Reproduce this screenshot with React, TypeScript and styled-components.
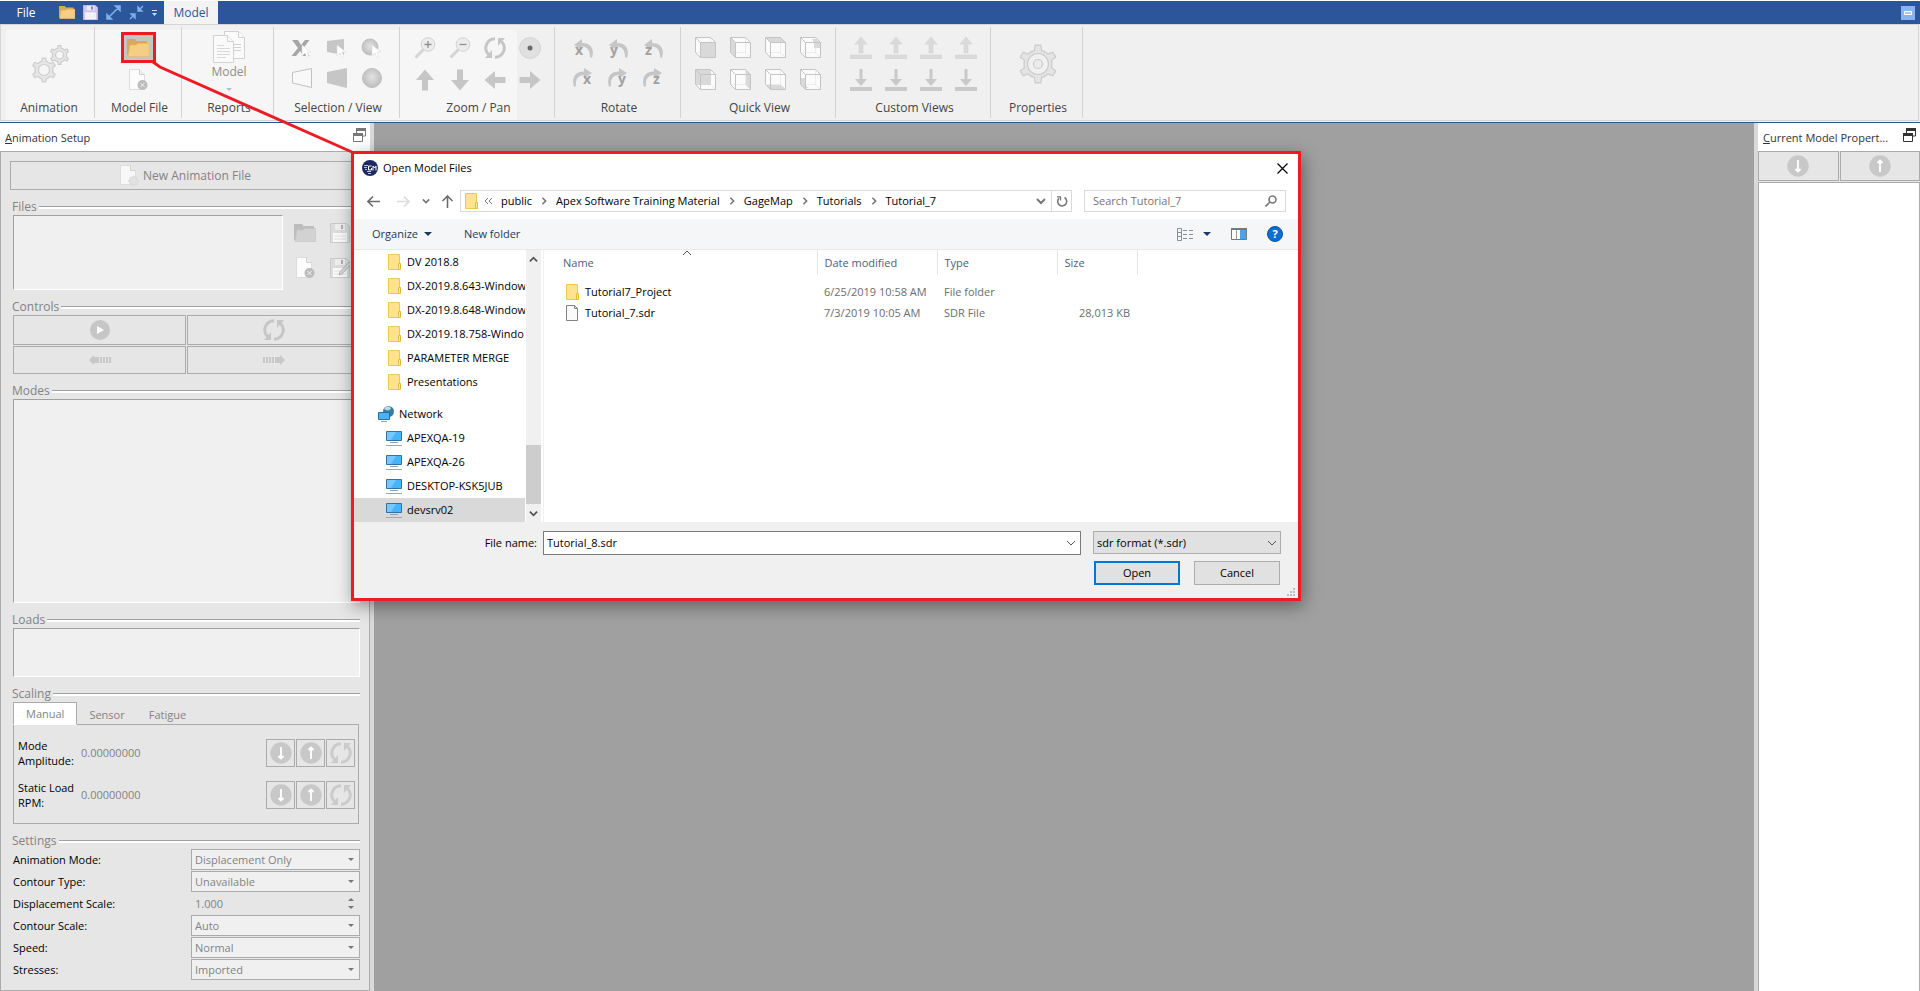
import React from "react";
import styled, { createGlobalStyle } from "styled-components";

const GlobalStyle = createGlobalStyle`
  * { box-sizing: border-box; }
  html, body, #root { height: 100%; }
  body {
    margin: 0;
    background: #a0a0a0;
    color: #000;
    font-family: "Open Sans", "Noto Sans", sans-serif;
    font-size: 11px;
    line-height: 16px;
  }
  button, input, select { font: inherit; margin: 0; border-radius: 0; }
  button { padding: 0; border: 0; background: none; color: inherit; }
  svg { display: block; flex: none; }
`;

/* ---------- icons ---------- */

const GREY = "#c6c6c6";

const gearPath = (cx: number, cy: number, outer: number, inner: number, teeth = 6) => {
  const step = (Math.PI * 2) / teeth;
  const pts: string[] = [];
  const at = (r: number, a: number) => `${(cx + r * Math.sin(a)).toFixed(2)} ${(cy - r * Math.cos(a)).toFixed(2)}`;
  for (let i = 0; i < teeth; i++) {
    const a = i * step;
    pts.push(at(inner, a - step * 0.25), at(outer, a - step * 0.14), at(outer, a + step * 0.14), at(inner, a + step * 0.25), at(inner, a + step * 0.5));
  }
  return `M${pts.join("L")}Z`;
};

const Gears = () => (
  <svg width="38" height="40" viewBox="0 0 38 40" fill="#e6e6e6" stroke="#cdcdcd" strokeWidth="1.2">
    <path d={gearPath(12, 26, 12, 9)} />
    <circle cx="12" cy="26" r="5.5" fill="#f6f6f6" />
    <path d={gearPath(27.5, 11, 9.5, 7)} />
    <circle cx="27.5" cy="11" r="4" fill="#f6f6f6" />
  </svg>
);

const BigGear = () => (
  <svg width="40" height="40" viewBox="0 0 40 40" fill="#e4e4e4" stroke="#cbcbcb" strokeWidth="1.2">
    <path d={gearPath(20, 20, 19, 14)} />
    <circle cx="20" cy="20" r="10.5" fill="#f0f0f0" />
    <circle cx="20" cy="20" r="4.5" fill="#ebebeb" />
  </svg>
);

const FolderIcon = ({ width = 22, grey = false }: { width?: number; grey?: boolean }) => (
  <svg width={width} height={(width * 18) / 22} viewBox="0 0 22 18">
    <path d="M0 0h8l1.500 2H20v14H0z" fill={grey ? "#bdbdbd" : "#d9a958"} />
    <path d="M1 17.500 3 6h6l2-1.500h11v13z" fill={grey ? "#d2d2d2" : "#f5cd83"} stroke={grey ? "#c4c4c4" : "#e6b96a"} strokeWidth=".6" />
  </svg>
);

const SaveIcon = ({ tone = "grey", pencil = false, size = 20 }: { tone?: "grey" | "violet"; pencil?: boolean; size?: number }) => {
  const v = tone === "violet";
  return (
    <svg width={size} height={size} viewBox="0 0 20 20">
      <path d="M.5.5h16l3 3v16H.5z" fill={v ? "#cfc6ea" : "#dcdcdc"} stroke={v ? "#cfc6ea" : "#cacaca"} />
      <path d="M5 1h10v6H5z" fill={v ? "#ece8f8" : "#efefef"} />
      <path d="M11 2h2v4h-2z" fill={v ? "#6d6a86" : "#b0b0b0"} />
      <path d="M3 10h14v9H3z" fill="#fafafa" />
      <path d="M4 13h12M4 16h12" stroke="#e0e0e0" />
      {pencil && <path d="m9 17 1-3 9-10 2 2-9 10z" fill="#d9d9d9" stroke="#ababab" strokeWidth=".8" />}
    </svg>
  );
};

const Expand = ({ inward = false }: { inward?: boolean }) => (
  <svg width="15" height="15" viewBox="0 0 15 15" fill="#7fb0ee" stroke="#7fb0ee" strokeWidth="1.400">
    {inward ? (
      <path d="M1 14l4-4M14 1l-4 4M2 9h4v4zM9 2v4h4z" />
    ) : (
      <path d="M2 13 13 2M9.500 1H14v4.500zM1 9.500V14h4.500z" strokeWidth="1.500" />
    )}
  </svg>
);

const DocDelete = () => (
  <svg width="20" height="22" viewBox="0 0 20 22">
    <path d="M1.500.5h10l5 5v15h-15z" fill="#fcfcfc" stroke="#dcdcdc" />
    <path d="M11.500.5v5h5" fill="#efefef" stroke="#d0d0d0" />
    <circle cx="14.500" cy="16" r="5" fill="#bcbcbc" />
    <path d="m12.500 14 4 4m0-4-4 4" stroke="#f2f2f2" />
  </svg>
);

const DocNew = () => (
  <svg width="20" height="22" viewBox="0 0 20 22">
    <path d="M1.500.5h10l5 5v14h-15z" fill="#f7f7f7" stroke="#dedede" />
    <path d="M11.500.5v5h5" fill="#e9e9e9" stroke="#d2d2d2" />
    <path d={gearPath(14.5, 16, 5, 4, 8)} fill="#e2e2e2" stroke="#d2d2d2" strokeWidth=".7" />
  </svg>
);

const ReportDocs = () => (
  <svg width="32" height="33" viewBox="0 0 32 33" fill="#fafafa" stroke="#d2d2d2">
    <path d="M11.500.5h14l6 6v21h-20z" />
    <path d="M25.500.5v6h6" />
    <path d="M21 13.500h7M21 16.500h7M21 19.500h7" />
    <path d="M.5 4.500h14l6 6v21H.5z" />
    <path d="M14.500 4.500v6h6" />
    <path d="M4 14.500h7M4 17.500h13M4 20.500h13M4 23.500h13M4 26.500h9" stroke="#d9d9d9" />
  </svg>
);

const Cursor = () => <path d="M11 7v11l3-3 2 5 2-1-2-5h4z" fill="#fff" stroke="#dedede" strokeWidth=".6" />;

const SelIcon = ({ kind, cursor = false }: { kind: "x" | "trap" | "trapLine" | "ball"; cursor?: boolean }) => (
  <svg width="22" height="22" viewBox="0 0 22 22">
    <defs>
      <radialGradient id="ball" cx=".5" cy=".45" r=".55">
        <stop offset="0" stopColor="#e2e2e2" />
        <stop offset="1" stopColor="#bdbdbd" />
      </radialGradient>
    </defs>
    {kind === "x" && <path d="M1 2h6l3 5 4-5h4.500l-6 8 6 8h-6l-3.500-5-4 5H.5l6.500-8z" fill="#a6a6a6" />}
    {kind === "trap" && <path d={cursor ? "M1 3 18 1v16L1 14z" : "M1 5 21 1v20L1 16z"} fill="#c6c6c6" />}
    {kind === "trapLine" && <path d="M1.500 5.500 20.500 1.500v19L1.500 16z" fill="#f8f8f8" stroke="#c2c2c2" />}
    {kind === "ball" && <circle cx={cursor ? 9 : 11} cy={cursor ? 9 : 11} r={cursor ? 8 : 9.5} fill="url(#ball)" stroke="#c0c0c0" />}
    {cursor && <Cursor />}
  </svg>
);

const Magnifier = ({ minus = false }: { minus?: boolean }) => (
  <svg width="22" height="22" viewBox="0 0 22 22">
    <path d="m1.500 20.500 8-8" stroke="#d4d4d4" strokeWidth="3" />
    <circle cx="14" cy="7.500" r="6.800" fill="#ececec" stroke="#d2d2d2" />
    <path d={minus ? "M10.500 7.500h7" : "M10.500 7.500h7M14 4v7"} stroke="#909090" strokeWidth="1.300" />
  </svg>
);

const Cycle = ({ color = GREY }: { color?: string }) => (
  <svg width="22" height="22" viewBox="0 0 22 22" fill="none" stroke={color} strokeWidth="3">
    <path d="M11 1.800A9.200 9.200 0 0 0 4.500 17.500" />
    <path d="M11 20.200A9.200 9.200 0 0 0 17.500 4.500" />
    <path d="M8 13v8H1z" fill={color} stroke="none" />
    <path d="M14 9V1h7z" fill={color} stroke="none" />
  </svg>
);

const Target = () => (
  <svg width="22" height="22" viewBox="0 0 22 22">
    <circle cx="11" cy="11" r="10.500" fill="#e0e0e0" stroke="#d4d4d4" />
    <circle cx="11" cy="11" r="2.500" fill="#6b6b6b" />
  </svg>
);

const Arrow = ({ turn }: { turn: number }) => (
  <svg width="22" height="22" viewBox="0 0 22 22">
    <path d="M11 0.500 20 11h-6v10.500H8V11H2z" fill={GREY} transform={`rotate(${turn} 11 11)`} />
  </svg>
);

const RotateIcon = ({ axis, back = false }: { axis: string; back?: boolean }) => (
  <svg width="22" height="22" viewBox="0 0 22 22">
    {back ? (
      <path d="M2 20C-1 10 4 4 12 4.500V1l8 5-8 5.500V8C7 8 3 12 4 19z" fill={GREY} />
    ) : (
      <path d="M20 20C23 10 18 5 10 5V1L2 7l8 5V8.500C15 8.500 18 12 18 19z" fill={GREY} />
    )}
    <text x={back ? 11 : 3} y="17" fontSize="14" fontWeight="700" fill="#a2a2a2">{axis}</text>
  </svg>
);

const cubeFaces: Record<string, string> = {
  front: "M5 5h15v15H5z",
  left: "M1 1 5 5v15l-4-4z",
  top: "M1 1h15l4 4H5z",
  cornerTop: "M12 2h4l4 4v5h-6V6z",
  back: "M1 1h15v15H1z",
  right: "M16 1l4 4v15l-4-4z",
  bottom: "M1 16h15l4 4H5z",
  cornerBottom: "M1 9h5v8l3 2H4l-3-3z",
};

const Cube = ({ face }: { face: string }) => (
  <svg width="21" height="21" viewBox="0 0 21 21" fill="none" stroke="#c4c4c4">
    <path d="M.5.5h15l5 5v15h-15l-5-5z" fill="#fbfbfb" stroke="none" />
    <path d="M15.500.5v15H.5M15.500 15.500l5 5" strokeDasharray="1 1" stroke="#dcdcdc" />
    <path d={cubeFaces[face]} fill="#d9d9d9" stroke="none" />
    <path d="M.5.5h15l5 5v15h-15l-5-5zM.5.5l5 5M5.500 20.500v-15h15" />
  </svg>
);

const ViewArrow = ({ down = false }: { down?: boolean }) => (
  <svg width="22" height="22" viewBox="0 0 22 22">
    {down ? (
      <path d="M9.500 0h3v10H17l-6 7-6-7h4.500zM0 18h22v4H0z" fill="#c9c9c9" />
    ) : (
      <path d="M11 0l6 7h-4v9H9V7H5zM0 18h22v4H0z" fill="#dadada" stroke="#d0d0d0" strokeWidth=".5" />
    )}
  </svg>
);

const RoundArrow = ({ up = false }: { up?: boolean }) => (
  <svg width="22" height="22" viewBox="0 0 22 22">
    <circle cx="11" cy="11" r="10.700" fill="#c8c8c8" />
    <path d={up ? "M11 17V6M8.500 8 11 5.500 13.500 8" : "M11 5v11M8.500 14l2.500 2.500 2.500-2.500"} fill="none" stroke="#fff" strokeWidth="1.800" />
  </svg>
);

const PlayIcon = () => (
  <svg width="20" height="20" viewBox="0 0 20 20">
    <circle cx="10" cy="10" r="10" fill="#c6c6c6" />
    <path d="m7 6 7 4-7 4z" fill="#fff" />
  </svg>
);

const StepArrow = ({ right = false }: { right?: boolean }) => (
  <svg width="22" height="10" viewBox="0 0 22 10">
    <path d="M5 0v2h5v6H5v2L0 5zM11 2h2v6h-2zM14 2h2v6h-2zM17 2h2v6h-2zM20 2h2v6h-2z" fill="#c8c8c8" transform={right ? "rotate(180 11 5)" : undefined} />
  </svg>
);

const FloatIcon = ({ color }: { color: string }) => (
  <svg width="13" height="14" viewBox="0 0 13 14" fill="none" stroke={color}>
    <path d="M3.500 5V1h9v7H9" />
    <path d="M3 1.500h10" strokeWidth="3" />
    <path d="M.5 6h9v7.500h-9z" fill="#fff" />
    <path d="M0 6.500h10" strokeWidth="3" />
  </svg>
);

const YellowFolder = () => (
  <svg width="13" height="16" viewBox="0 0 13 16">
    <path d="M.5.5h11v15H.5z" fill="#ffe38f" stroke="#ecc94f" />
    <path d="M10.500 9.500h2v6h-2z" fill="#ffe9a6" stroke="#e3bb3c" />
  </svg>
);

const PlainDoc = () => (
  <svg width="13" height="16" viewBox="0 0 13 16">
    <path d="M.5.5h8l3 3v12H.5z" fill="#fafafa" stroke="#848484" />
    <path d="M8.500.5v3h3" fill="none" stroke="#848484" />
  </svg>
);

const Monitor = () => (
  <svg width="16" height="16" viewBox="0 0 16 16">
    <path d="M.5 1.500h15v9H.5z" fill="#46b4fb" stroke="#34719e" />
    <path d="M1 2h9l-5 8H1z" fill="#74c8ff" />
    <path d="M4 12.500h8" stroke="#8ba3b5" />
    <path d="M0 15.500h16" stroke="#9aabb8" />
  </svg>
);

const NetworkIcon = () => (
  <svg width="16" height="16" viewBox="0 0 16 16">
    <circle cx="10.500" cy="5.500" r="5.500" fill="#3b7d9e" />
    <path d="M6 3c2-3 5-3 7-1-1 3-4 3-7 1z" fill="#b9dbe6" />
    <path d="M.5 6.500h11v7H.5z" fill="#46b4fb" stroke="#2d6c99" />
    <path d="M3 15.500h6" stroke="#8ba3b5" />
  </svg>
);

const Chevron = ({ turn = 0, color = "#555", width = 2, size = 10 }: { turn?: number; color?: string; width?: number; size?: number }) => (
  <svg width={size} height={size} viewBox="0 0 10 10" fill="none" stroke={color} strokeWidth={width}>
    <path d="m1 3 4 4 4-4" transform={`rotate(${turn} 5 5)`} />
  </svg>
);

const NavArrow = ({ color, turn = 0 }: { color: string; turn?: number }) => (
  <svg width="13" height="13" viewBox="0 0 13 13" fill="none" stroke={color} strokeWidth="1.600">
    <path d="M1 6.500h12M6 1.500l-5 5 5 5" transform={`rotate(${turn} 6.500 6.500)`} />
  </svg>
);

const Caret = ({ color = "#1f3864", width = 8 }: { color?: string; width?: number }) => (
  <svg width={width} height={width / 2} viewBox="0 0 8 4"><path d="M0 0h8L4 4z" fill={color} /></svg>
);

const AppLogo = () => (
  <svg width="16" height="16" viewBox="0 0 16 16">
    <circle cx="8" cy="8" r="8" fill="#1c2963" />
    <path d="M2 5.500h4M2 7.500h3M3 9.500h2M5 11.500h4M6 13.500h3" stroke="#b9c0dc" />
    <path d="M9.500 6H6.500v4h3V8M11 10.500V6l1.500 2L14 6v4.500" fill="none" stroke="#fff" />
  </svg>
);

/* ---------- frame ---------- */

const Page = styled.div`
  position: relative;
  display: flex;
  flex-direction: column;
  height: 100vh;
  min-height: 900px;
  overflow: hidden;
`;

const TitleBar = styled.header`
  display: flex;
  align-items: center;
  height: 24px;
  border-top: 1px solid #fff;
  background: #2b579a;
  color: #fff;
  font-size: 12px;
`;

const FileMenu = styled.button`
  width: 52px;
  color: #fff;
`;

const QuickAccess = styled.div`
  display: flex;
  align-items: center;
  gap: 8px;
  width: 112px;
  padding-left: 7px;
`;

const ModelTab = styled.button`
  align-self: stretch;
  width: 54px;
  background: #f3f3f3;
  color: #2b579a;
`;

const MinimizeRibbon = styled.button`
  display: grid;
  place-items: center;
  width: 14px;
  height: 14px;
  margin: 0 5px 0 auto;
  background: #8ab4f0;
`;

const RibbonFrame = styled.div`
  padding: 0 1px 1px 0;
  border-bottom: 1px solid #2b579a;
  background: #f0f0f0;
`;

const Ribbon = styled.nav`
  display: flex;
  height: 97px;
  padding: 2px 0;
  border: 1px solid #d5d5d5;
  background: linear-gradient(#f6f6f6, #f6f6f6) 5px 5px / 511px 100% no-repeat #f0f0f0;
  font-size: 12px;
`;

const RibbonGroup = styled.section<{ $width: number }>`
  display: flex;
  flex-direction: column;
  align-items: center;
  flex: none;
  width: ${(p) => p.$width}px;
  padding-top: 4px;
  border-right: 1px solid #d2d2d2;
`;

const RibbonBody = styled.div<{ $indent?: number }>`
  display: flex;
  flex-direction: column;
  align-items: center;
  justify-content: center;
  height: 65px;
  padding-left: ${(p) => p.$indent ?? 0}px;
`;

const RibbonLabel = styled.h2`
  margin: 4px 0 0;
  padding-left: 3px;
  color: #444;
  font-size: 12px;
  font-weight: 400;
  line-height: 16px;
`;

const IconGrid = styled.div<{ $cols: number; $row: number }>`
  display: grid;
  grid-template-columns: repeat(${(p) => p.$cols}, 35px);
  grid-auto-rows: ${(p) => p.$row}px;
`;

const IconButton = styled.button`
  display: grid;
  place-items: center;
`;

const MarkedButton = styled.button`
  display: grid;
  place-items: center;
  width: 35px;
  height: 31px;
  border: 3px solid #ed1c24;
  background: #c5c5c5;
`;

const ModelFileBody = styled(RibbonBody)`
  gap: 6px;
  justify-content: flex-start;
  padding-top: 1px;
`;

const ReportBody = styled(RibbonBody)`
  justify-content: flex-start;
`;

const ReportButton = styled.button`
  display: flex;
  flex-direction: column;
  align-items: center;
  color: #8d8d8d;
  svg:last-child { margin-top: 8px; }
`;

/* ---------- workspace ---------- */

const Workspace = styled.div`
  display: flex;
  flex: 1;
  min-height: 0;
`;

const SidePanel = styled.aside<{ $side: "left" | "right" }>`
  display: flex;
  flex-direction: column;
  flex: none;
  width: ${(p) => (p.$side === "left" ? 374 : 166)}px;
  border: 0 solid #d9d9d9;
  border-width: ${(p) => (p.$side === "left" ? "0 4px 0 0" : "0 0 0 4px")};
  background: #fff;
`;

const Canvas = styled.main`
  flex: 1;
  background: #a0a0a0;
`;

const PanelTitle = styled.div`
  display: flex;
  align-items: flex-start;
  justify-content: space-between;
  height: 28px;
  padding: 5px 4px 0 5px;
  color: #333;
`;

const PanelHeading = styled.h2`
  margin: 2px 0 0;
  overflow: hidden;
  font-size: 11px;
  font-weight: 400;
  text-overflow: ellipsis;
  white-space: nowrap;
`;

const PanelBody = styled.div`
  display: flex;
  flex-direction: column;
  flex: 1;
  min-height: 0;
  padding: 9px 9px 10px;
  border: 1px solid #ababab;
  background: #e6e6e6;
`;

const FlatButton = styled.button<{ $height?: number }>`
  display: flex;
  align-items: center;
  justify-content: center;
  gap: 4px;
  width: 100%;
  height: ${(p) => p.$height ?? 28}px;
  border: 1px solid #ababab;
  background: #e6e6e6;
  color: #838383;
  font-size: 12px;
`;

const Group = styled.section<{ $grow?: boolean }>`
  display: flex;
  flex-direction: column;
  flex: ${(p) => (p.$grow ? "1" : "none")};
  min-height: 0;
  margin-top: 9px;
`;

const Legend = styled.h3`
  display: flex;
  align-items: center;
  gap: 2px;
  margin: 0 0 0 2px;
  color: #838383;
  font-size: 12px;
  font-weight: 400;
  line-height: 16px;
  &::after {
    content: "";
    flex: 1;
    height: 2px;
    border-top: 1px solid #a0a0a0;
    background: #fff;
  }
`;

const GroupBody = styled.div`
  display: flex;
  flex-direction: column;
  flex: 1;
  padding-left: 3px;
`;

const Well = styled.div<{ $height?: number; $width?: number }>`
  flex: ${(p) => (p.$height ? "none" : "1")};
  height: ${(p) => (p.$height ? `${p.$height}px` : "auto")};
  width: ${(p) => (p.$width ? `${p.$width}px` : "auto")};
  border: 1px solid;
  border-color: #a0a0a0 #fff #fff #a0a0a0;
  background: #f0f0f0;
`;

const FilesRow = styled.div`
  display: flex;
  gap: 4px;
`;

const ControlGrid = styled.div`
  display: grid;
  grid-template-columns: 1fr 1fr;
  grid-template-rows: 30px 28px;
  gap: 1px;
`;

const Tabs = styled.div`
  display: flex;
  height: 23px;
  margin-bottom: -1px;
`;

const TabButton = styled.button<{ $active?: boolean }>`
  z-index: 1;
  padding: ${(p) => (p.$active ? "0 12px" : "2px 11px 0")};
  border: 1px solid ${(p) => (p.$active ? "#ababab" : "transparent")};
  border-bottom-color: ${(p) => (p.$active ? "#fff" : "transparent")};
  background: ${(p) => (p.$active ? "#fff" : "none")};
  color: #838383;
`;

const TabPanel = styled.div`
  display: flex;
  flex-direction: column;
  gap: 14px;
  margin-right: 1px;
  padding: 14px 3px 14px 4px;
  border: 1px solid #ababab;
`;

const ScaleRow = styled.div`
  display: flex;
  align-items: center;
  gap: 1px;
  height: 28px;
`;

const ScaleLabel = styled.label`
  width: 62px;
  line-height: 15px;
`;

const ScaleInput = styled.input`
  flex: 1;
  min-width: 0;
  padding: 0;
  border: 0;
  background: none;
  color: #838383;
`;

const SquareButton = styled.button`
  display: grid;
  place-items: center;
  width: 29px;
  height: 28px;
  border: 1px solid #ababab;
`;

const SettingRow = styled.div`
  display: flex;
  align-items: center;
  height: 21px;
  margin-bottom: 1px;
  &:last-child { margin-bottom: 0; }
`;

const SettingLabel = styled.label`
  flex: 1;
`;

const FieldWrap = styled.div<{ $plain?: boolean }>`
  position: relative;
  width: 169px;
  height: 21px;
  border: 1px solid ${(p) => (p.$plain ? "transparent" : "#ababab")};
  background: ${(p) => (p.$plain ? "none" : "#f0f0f0")};
`;

const SettingSelect = styled.select`
  appearance: none;
  width: 100%;
  height: 100%;
  padding: 0 3px;
  border: 0;
  background: none;
  color: #838383;
  opacity: 1;
`;

const SettingInput = styled.input`
  width: 100%;
  height: 100%;
  padding: 0 3px;
  border: 0;
  background: none;
  color: #838383;
`;

const FieldMark = styled.span<{ $right: number }>`
  position: absolute;
  top: 0;
  right: ${(p) => p.$right}px;
  bottom: 0;
  display: flex;
  flex-direction: column;
  justify-content: center;
  gap: 5px;
  pointer-events: none;
`;

const ButtonPair = styled.div`
  display: grid;
  grid-template-columns: 1fr 1fr;
  gap: 1px;
  padding-bottom: 1px;
  background: #e6e6e6;
`;

const PropertyList = styled.div`
  flex: 1;
  border: 1px solid #ababab;
  border-bottom: 0;
  background: #fff;
`;

/* ---------- dialog ---------- */

const Dialog = styled.div`
  position: absolute;
  top: 151px;
  left: 351px;
  display: flex;
  flex-direction: column;
  width: 950px;
  border: 3px solid #ed1c24;
  background: #fff;
  box-shadow: 2px 5px 16px rgba(0, 0, 0, 0.4);
`;

const DialogTitle = styled.div`
  display: flex;
  align-items: center;
  gap: 5px;
  height: 36px;
  padding: 0 8px 8px;
`;

const DialogHeading = styled.h1`
  flex: 1;
  margin: 0;
  font-size: 11px;
  font-weight: 400;
  line-height: 16px;
`;

const NavRow = styled.div`
  display: flex;
  height: 22px;
  margin: 0 12px 7px 4px;
`;

const NavButton = styled.button<{ $width: number }>`
  display: grid;
  place-items: center;
  width: ${(p) => p.$width}px;
`;

const AddressBar = styled.div`
  display: flex;
  align-items: center;
  flex: 1;
  padding-left: 4px;
  border: 1px solid #d9d9d9;
`;

const Crumb = styled.button`
  padding: 0 8px;
`;

const Overflow = styled.span`
  display: flex;
  margin-left: 6px;
  width: 9px;
`;

const AddressTools = styled.div`
  display: flex;
  align-self: stretch;
  margin-left: auto;
`;

const RefreshButton = styled(NavButton)`
  border-left: 1px solid #d9d9d9;
`;

const SearchBox = styled.div`
  display: flex;
  align-items: center;
  width: 202px;
  margin-left: 12px;
  padding: 0 8px;
  border: 1px solid #d9d9d9;
`;

const SearchInput = styled.input`
  flex: 1;
  min-width: 0;
  padding: 0;
  border: 0;
  outline: 0;
  &::placeholder { color: #757575; opacity: 1; }
`;

const Toolbar = styled.div`
  display: flex;
  align-items: center;
  height: 31px;
  padding: 0 15px 0 18px;
  border-bottom: 1px solid #e8e8ea;
  background: #f5f6f7;
  color: #1e395b;
`;

const ToolButton = styled.button`
  display: flex;
  align-items: center;
  gap: 6px;
  margin-right: 32px;
`;

const ToolIcons = styled.div`
  display: flex;
  align-items: center;
  gap: 20px;
  margin-left: auto;
`;

const ViewPicker = styled.button`
  display: flex;
  align-items: center;
  gap: 9px;
`;

const Browser = styled.div`
  display: flex;
  height: 272px;
`;

const Tree = styled.ul`
  width: 171px;
  margin: 0;
  padding: 0;
  overflow: hidden;
  list-style: none;
`;

const TreeItem = styled.li<{ $root?: boolean }>`
  margin-top: ${(p) => (p.$root ? 8 : 0)}px;
`;

const TreeButton = styled.button<{ $indent: number; $selected?: boolean }>`
  display: flex;
  align-items: center;
  gap: 5px;
  width: 100%;
  height: 24px;
  padding-left: ${(p) => p.$indent}px;
  background: ${(p) => (p.$selected ? "#d9d9d9" : "none")};
  white-space: nowrap;
`;

const TreeIcon = styled.span`
  display: flex;
  justify-content: center;
  flex: none;
  width: 16px;
`;

const ScrollTrack = styled.div`
  display: flex;
  flex-direction: column;
  width: 15px;
  margin: 0 2px 0 1px;
  background: #f0f0f0;
`;

const ScrollEnd = styled.button`
  display: grid;
  place-items: center;
  height: 18px;
`;

const ScrollThumb = styled.div`
  height: 59px;
  margin-top: auto;
  background: #cdcdcd;
`;

const FilePane = styled.div`
  flex: 1;
  border-left: 1px solid #f0f0f0;
`;

const FileTable = styled.table`
  border-collapse: collapse;
  table-layout: fixed;
  width: 593px;
`;

const HeadCell = styled.th<{ $width: number; $first?: boolean }>`
  position: relative;
  width: ${(p) => p.$width}px;
  height: 25px;
  padding: 0 0 0 ${(p) => (p.$first ? 19 : 7)}px;
  border-right: 1px solid #e5e5e5;
  color: #4c607a;
  font-weight: 400;
  text-align: left;
`;

const SortMark = styled.span`
  position: absolute;
  top: -2px;
  left: 138px;
`;

const FileRow = styled.tr<{ $first?: boolean }>`
  height: ${(p) => (p.$first ? 28 : 21)}px;
  vertical-align: bottom;
`;

const Cell = styled.td<{ $right?: boolean }>`
  padding: 0 7px 3px;
  color: #6d6d6d;
  text-align: ${(p) => (p.$right ? "right" : "left")};
  white-space: nowrap;
`;

const NameCell = styled.td`
  padding: 0 0 3px 22px;
`;

const FileName = styled.div`
  display: flex;
  align-items: center;
  gap: 6px;
`;

const Footer = styled.div`
  position: relative;
  display: flex;
  flex-direction: column;
  gap: 6px;
  height: 76px;
  padding: 9px 17px 0 0;
  background: #f0f0f0;
`;

const FooterRow = styled.div`
  display: flex;
  justify-content: flex-end;
  height: 24px;
`;

const FileLabel = styled.label`
  width: 189px;
  padding: 4px 6px 0 0;
  text-align: right;
`;

const NameBox = styled.div`
  display: flex;
  flex: 1;
  margin-right: 12px;
  border: 1px solid #7a7a7a;
  background: #fff;
`;

const NameInput = styled.input`
  flex: 1;
  padding: 0 3px;
  border: 0;
  outline: 0;
`;

const FormatWrap = styled.div`
  position: relative;
  width: 188px;
  height: 23px;
`;

const FormatSelect = styled.select`
  appearance: none;
  width: 100%;
  height: 100%;
  padding: 0 3px;
  border: 1px solid #adadad;
  background: #e1e1e1;
  color: #000;
`;

const ActionRow = styled(FooterRow)`
  gap: 14px;
  padding-right: 1px;
`;

const ActionButton = styled.button<{ $primary?: boolean }>`
  width: 86px;
  height: 24px;
  border: ${(p) => (p.$primary ? "2px solid #0078d7" : "1px solid #adadad")};
  background: #e1e1e1;
`;

const Grip = styled.span`
  position: absolute;
  right: 3px;
  bottom: 2px;
`;

const Callout = styled.svg`
  position: absolute;
  top: 60px;
  left: 150px;
  pointer-events: none;
`;

/* ---------- data ---------- */

const ribbonGrids = [
  {
    label: "Selection / View", width: 126, cols: 3, row: 29,
    icons: [
      <SelIcon kind="x" cursor />, <SelIcon kind="trap" cursor />, <SelIcon kind="ball" cursor />,
      <SelIcon kind="trapLine" />, <SelIcon kind="trap" />, <SelIcon kind="ball" />,
    ],
  },
  {
    label: "Zoom / Pan", width: 155, cols: 4, row: 32,
    icons: [
      <Magnifier />, <Magnifier minus />, <Cycle />, <Target />,
      <Arrow turn={0} />, <Arrow turn={180} />, <Arrow turn={270} />, <Arrow turn={90} />,
    ],
  },
  {
    label: "Rotate", width: 126, cols: 3, row: 29,
    icons: [
      <RotateIcon axis="x" />, <RotateIcon axis="y" />, <RotateIcon axis="z" />,
      <RotateIcon axis="x" back />, <RotateIcon axis="y" back />, <RotateIcon axis="z" back />,
    ],
  },
  {
    label: "Quick View", width: 155, cols: 4, row: 32,
    icons: ["front", "left", "top", "cornerTop", "back", "right", "bottom", "cornerBottom"].map((f) => <Cube face={f} />),
  },
  {
    label: "Custom Views", width: 155, cols: 4, row: 32,
    icons: [0, 1, 2, 3, 4, 5, 6, 7].map((n) => <ViewArrow down={n > 3} />),
  },
];

const treeFolders = ["DV 2018.8", "DX-2019.8.643-Window", "DX-2019.8.648-Window", "DX-2019.18.758-Windo", "PARAMETER MERGE", "Presentations"];
const treeComputers = ["APEXQA-19", "APEXQA-26", "DESKTOP-KSK5JUB", "devsrv02"];
const crumbs = ["public", "Apex Software Training Material", "GageMap", "Tutorials", "Tutorial_7"];

const settings = [
  { label: "Animation Mode:", value: "Displacement Only" },
  { label: "Contour Type:", value: "Unavailable" },
  { label: "Displacement Scale:", value: "1.000", spin: true },
  { label: "Contour Scale:", value: "Auto" },
  { label: "Speed:", value: "Normal" },
  { label: "Stresses:", value: "Imported" },
];

const scales = [
  { id: "amplitude", lines: ["Mode", "Amplitude:"] },
  { id: "rpm", lines: ["Static Load", "RPM:"] },
];

const AnimationPanel = () => (
  <SidePanel $side="left">
    <PanelTitle>
      <PanelHeading><u>A</u>nimation Setup</PanelHeading>
      <IconButton aria-label="Float panel"><FloatIcon color="#777" /></IconButton>
    </PanelTitle>
    <PanelBody>
      <FlatButton $height={29}><DocNew />New Animation File</FlatButton>
      <Group>
        <Legend>Files</Legend>
        <GroupBody>
          <FilesRow>
            <Well $height={75} $width={270} />
            <IconGrid $cols={2} $row={35}>
              <IconButton aria-label="Open file"><FolderIcon grey /></IconButton>
              <IconButton aria-label="Save file"><SaveIcon /></IconButton>
              <IconButton aria-label="Remove file"><DocDelete /></IconButton>
              <IconButton aria-label="Save file as"><SaveIcon pencil /></IconButton>
            </IconGrid>
          </FilesRow>
        </GroupBody>
      </Group>
      <Group>
        <Legend>Controls</Legend>
        <GroupBody>
          <ControlGrid>
            <FlatButton $height={30} aria-label="Play"><PlayIcon /></FlatButton>
            <FlatButton $height={30} aria-label="Loop"><Cycle /></FlatButton>
            <FlatButton aria-label="Step back"><StepArrow /></FlatButton>
            <FlatButton aria-label="Step forward"><StepArrow right /></FlatButton>
          </ControlGrid>
        </GroupBody>
      </Group>
      <Group $grow>
        <Legend>Modes</Legend>
        <GroupBody><Well /></GroupBody>
      </Group>
      <Group>
        <Legend>Loads</Legend>
        <GroupBody><Well $height={49} /></GroupBody>
      </Group>
      <Group>
        <Legend>Scaling</Legend>
        <GroupBody>
          <Tabs role="tablist">
            <TabButton role="tab" aria-selected $active>Manual</TabButton>
            <TabButton role="tab">Sensor</TabButton>
            <TabButton role="tab">Fatigue</TabButton>
          </Tabs>
          <TabPanel>
            {scales.map((s) => (
              <ScaleRow key={s.id}>
                <ScaleLabel htmlFor={s.id}>{s.lines[0]}<br />{s.lines[1]}</ScaleLabel>
                <ScaleInput id={s.id} defaultValue="0.00000000" />
                <SquareButton aria-label="Decrease"><RoundArrow /></SquareButton>
                <SquareButton aria-label="Increase"><RoundArrow up /></SquareButton>
                <SquareButton aria-label="Reset"><Cycle color="#cbcbcb" /></SquareButton>
              </ScaleRow>
            ))}
          </TabPanel>
        </GroupBody>
      </Group>
      <Group>
        <Legend>Settings</Legend>
        <GroupBody>
          {settings.map((s) => (
            <SettingRow key={s.label}>
              <SettingLabel htmlFor={s.label}>{s.label}</SettingLabel>
              <FieldWrap $plain={s.spin}>
                {s.spin ? (
                  <SettingInput id={s.label} defaultValue={s.value} />
                ) : (
                  <SettingSelect id={s.label}><option>{s.value}</option></SettingSelect>
                )}
                <FieldMark $right={5}>
                  {s.spin && <svg width="6" height="3" viewBox="0 0 6 3"><path d="M0 3h6L3 0z" fill="#777" /></svg>}
                  <Caret color="#777" width={6} />
                </FieldMark>
              </FieldWrap>
            </SettingRow>
          ))}
        </GroupBody>
      </Group>
    </PanelBody>
  </SidePanel>
);

const OpenDialog = () => (
  <Dialog role="dialog" aria-labelledby="dialog-title">
    <DialogTitle>
      <AppLogo />
      <DialogHeading id="dialog-title">Open Model Files</DialogHeading>
      <NavButton $width={15} aria-label="Close">
        <svg width="11" height="11" viewBox="0 0 11 11" stroke="#000" strokeWidth="1.200"><path d="m.5.5 10 10m0-10-10 10" /></svg>
      </NavButton>
    </DialogTitle>
    <NavRow>
      <NavButton $width={30} aria-label="Back"><NavArrow color="#6b6b6b" /></NavButton>
      <NavButton $width={30} aria-label="Forward"><NavArrow color="#dcdcdc" turn={180} /></NavButton>
      <NavButton $width={16} aria-label="Recent locations"><Chevron size={8} color="#777" /></NavButton>
      <NavButton $width={26} aria-label="Up"><NavArrow color="#6b6b6b" turn={90} /></NavButton>
      <AddressBar>
        <YellowFolder />
        <Overflow>
          <svg width="9" height="8" viewBox="0 0 9 8" fill="none" stroke="#777"><path d="M4 1 1 4l3 3M8 1 5 4l3 3" /></svg>
        </Overflow>
        {crumbs.map((c, i) => (
          <React.Fragment key={c}>
            {i > 0 && <Chevron turn={270} size={8} color="#777" />}
            <Crumb>{c}</Crumb>
          </React.Fragment>
        ))}
        <AddressTools>
          <NavButton $width={20} aria-label="Previous locations"><Chevron color="#777" /></NavButton>
          <RefreshButton $width={20} aria-label="Refresh">
            <svg width="12" height="12" viewBox="0 0 12 12" fill="none" stroke="#777" strokeWidth="1.600">
              <path d="M8.500 2.500A4.500 4.500 0 1 1 3 3.200" />
              <path d="M1 1.800h3.500v3.700" strokeWidth="1.300" />
            </svg>
          </RefreshButton>
        </AddressTools>
      </AddressBar>
      <SearchBox>
        <SearchInput aria-label="Search Tutorial_7" placeholder="Search Tutorial_7" />
        <svg width="12" height="12" viewBox="0 0 12 12" fill="none" stroke="#777" strokeWidth="1.600"><circle cx="7.500" cy="4.500" r="3.500" /><path d="M5 7 .5 11.500" /></svg>
      </SearchBox>
    </NavRow>
    <Toolbar>
      <ToolButton>Organize <Caret /></ToolButton>
      <ToolButton>New folder</ToolButton>
      <ToolIcons>
        <ViewPicker aria-label="Change view">
          <svg width="17" height="13" viewBox="0 0 17 13" fill="none" stroke="#8a8f96">
            <path d="M.5.5h4v12h-4zM.5 4.500h4M.5 8.500h4M6 2.500h4M12 2.500h4M6 6.500h4M12 6.500h4M6 10.500h4M12 10.500h4" />
          </svg>
          <Caret />
        </ViewPicker>
        <IconButton aria-label="Preview pane">
          <svg width="16" height="12" viewBox="0 0 16 12"><path d="M.5.5h15v11H.5z" fill="#fff" stroke="#777" /><path d="M0 1h16" stroke="#777" strokeWidth="2" /><path d="M5.500 2v9" stroke="#999" /><path d="M9 2h6v9H9z" fill="#4aa3ea" /></svg>
        </IconButton>
        <IconButton aria-label="Help">
          <svg width="16" height="16" viewBox="0 0 16 16"><circle cx="8" cy="8" r="7.500" fill="#0a6fd0" stroke="#0b4f9a" /><text x="8" y="12" fontSize="11" fontWeight="700" fill="#fff" textAnchor="middle">?</text></svg>
        </IconButton>
      </ToolIcons>
    </Toolbar>
    <Browser>
      <Tree>
        {treeFolders.map((name) => (
          <TreeItem key={name}><TreeButton $indent={32}><TreeIcon><YellowFolder /></TreeIcon>{name}</TreeButton></TreeItem>
        ))}
        <TreeItem $root><TreeButton $indent={24}><TreeIcon><NetworkIcon /></TreeIcon>Network</TreeButton></TreeItem>
        {treeComputers.map((name) => (
          <TreeItem key={name}><TreeButton $indent={32} $selected={name === "devsrv02"}><TreeIcon><Monitor /></TreeIcon>{name}</TreeButton></TreeItem>
        ))}
      </Tree>
      <ScrollTrack>
        <ScrollEnd aria-label="Scroll up"><Chevron turn={180} size={9} /></ScrollEnd>
        <ScrollThumb />
        <ScrollEnd aria-label="Scroll down"><Chevron size={9} /></ScrollEnd>
      </ScrollTrack>
      <FilePane>
        <FileTable>
          <thead>
            <tr>
              <HeadCell $width={273} $first>Name<SortMark><Chevron turn={180} width={1} /></SortMark></HeadCell>
              <HeadCell $width={120}>Date modified</HeadCell>
              <HeadCell $width={120}>Type</HeadCell>
              <HeadCell $width={80}>Size</HeadCell>
            </tr>
          </thead>
          <tbody>
            <FileRow $first>
              <NameCell><FileName><YellowFolder />Tutorial7_Project</FileName></NameCell>
              <Cell>6/25/2019 10:58 AM</Cell><Cell>File folder</Cell><Cell />
            </FileRow>
            <FileRow>
              <NameCell><FileName><PlainDoc />Tutorial_7.sdr</FileName></NameCell>
              <Cell>7/3/2019 10:05 AM</Cell><Cell>SDR File</Cell><Cell $right>28,013 KB</Cell>
            </FileRow>
          </tbody>
        </FileTable>
      </FilePane>
    </Browser>
    <Footer>
      <FooterRow>
        <FileLabel htmlFor="file-name">File name:</FileLabel>
        <NameBox>
          <NameInput id="file-name" defaultValue="Tutorial_8.sdr" />
          <NavButton $width={18} aria-label="Previous file names"><Chevron width={1} /></NavButton>
        </NameBox>
        <FormatWrap>
          <FormatSelect aria-label="File format"><option>sdr format (*.sdr)</option></FormatSelect>
          <FieldMark $right={4}><Chevron width={1} /></FieldMark>
        </FormatWrap>
      </FooterRow>
      <ActionRow>
        <ActionButton $primary>Open</ActionButton>
        <ActionButton>Cancel</ActionButton>
      </ActionRow>
      <Grip>
        <svg width="8" height="8" viewBox="0 0 8 8" fill="#bdbdbd"><path d="M6 0h2v2H6zM3 3h2v2H3zM6 3h2v2H6zM0 6h2v2H0zM3 6h2v2H3zM6 6h2v2H6z" /></svg>
      </Grip>
    </Footer>
  </Dialog>
);

export default function App() {
  return (
    <Page>
      <GlobalStyle />
      <TitleBar>
        <FileMenu>File</FileMenu>
        <QuickAccess>
          <IconButton aria-label="Open"><FolderIcon width={16} /></IconButton>
          <IconButton aria-label="Save"><SaveIcon tone="violet" size={15} /></IconButton>
          <IconButton aria-label="Expand"><Expand /></IconButton>
          <IconButton aria-label="Collapse"><Expand inward /></IconButton>
          <IconButton aria-label="Customize"><svg width="5" height="6" viewBox="0 0 5 6" fill="#c9d8ef"><path d="M0 0h5v1H0zM0 3h5L2.500 6z" /></svg></IconButton>
        </QuickAccess>
        <ModelTab>Model</ModelTab>
        <MinimizeRibbon aria-label="Minimize ribbon">
          <svg width="8" height="4" viewBox="0 0 8 4"><path d="M.5.5h7v3h-7z" fill="#a9c8f5" stroke="#fff" /></svg>
        </MinimizeRibbon>
      </TitleBar>
      <RibbonFrame>
        <Ribbon>
          <RibbonGroup $width={94}>
            <RibbonBody $indent={6}><IconButton aria-label="Animation"><Gears /></IconButton></RibbonBody>
            <RibbonLabel>Animation</RibbonLabel>
          </RibbonGroup>
          <RibbonGroup $width={87}>
            <ModelFileBody>
              <MarkedButton aria-label="Open model file"><FolderIcon /></MarkedButton>
              <IconButton aria-label="Close model file"><DocDelete /></IconButton>
            </ModelFileBody>
            <RibbonLabel>Model File</RibbonLabel>
          </RibbonGroup>
          <RibbonGroup $width={92}>
            <ReportBody $indent={3}>
              <ReportButton><ReportDocs />Model<Caret width={6} color="#bdbdbd" /></ReportButton>
            </ReportBody>
            <RibbonLabel>Reports</RibbonLabel>
          </RibbonGroup>
          {ribbonGrids.map((g) => (
            <RibbonGroup key={g.label} $width={g.width}>
              <RibbonBody>
                <IconGrid $cols={g.cols} $row={g.row}>
                  {g.icons.map((icon, i) => <IconButton key={i} aria-label={`${g.label} ${i + 1}`}>{icon}</IconButton>)}
                </IconGrid>
              </RibbonBody>
              <RibbonLabel>{g.label}</RibbonLabel>
            </RibbonGroup>
          ))}
          <RibbonGroup $width={92}>
            <RibbonBody $indent={3}><IconButton aria-label="Properties"><BigGear /></IconButton></RibbonBody>
            <RibbonLabel>Properties</RibbonLabel>
          </RibbonGroup>
        </Ribbon>
      </RibbonFrame>
      <Workspace>
        <AnimationPanel />
        <Canvas />
        <SidePanel $side="right">
          <PanelTitle>
            <PanelHeading><u>C</u>urrent Model Propert...</PanelHeading>
            <IconButton aria-label="Float panel"><FloatIcon color="#333" /></IconButton>
          </PanelTitle>
          <ButtonPair>
            <FlatButton $height={30} aria-label="Move down"><RoundArrow /></FlatButton>
            <FlatButton $height={30} aria-label="Move up"><RoundArrow up /></FlatButton>
          </ButtonPair>
          <PropertyList />
        </SidePanel>
      </Workspace>
      <OpenDialog />
      <Callout width="204" height="94" viewBox="0 0 204 94" fill="none" stroke="#ed1c24" strokeWidth="3">
        <path d="M3 2 10 7 203 92.500" />
      </Callout>
    </Page>
  );
}
